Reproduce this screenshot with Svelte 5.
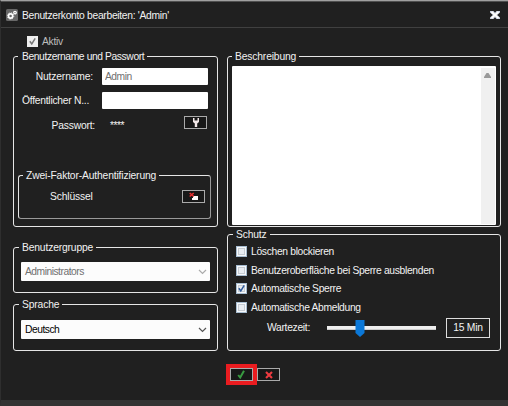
<script>
  let active = $state(true);
  let username = $state("Admin");
  let publicName = $state("");
  let description = $state("");
  let wait = $state(15);

  let options = $state([
    { label: "Löschen blockieren", checked: false },
    { label: "Benutzeroberfläche bei Sperre ausblenden", checked: false },
    { label: "Automatische Sperre", checked: true },
    { label: "Automatische Abmeldung", checked: false },
  ]);
</script>

{#snippet chevron()}
  <svg class="chevron" width="9" height="6" viewBox="0 0 9 6">
    <path d="M1 1l3.5 3.5L8 1" fill="none" stroke="currentColor" stroke-width="1.2" />
  </svg>
{/snippet}

{#snippet tick()}
  <svg width="11" height="11" viewBox="0 0 11 11">
    <path d="M2.8 5.2l2 2.8L8.2 2.4" fill="none" stroke="currentColor" stroke-width="1.5" />
  </svg>
{/snippet}

<div class="window">
  <header>
    <svg class="gear" width="12" height="12" viewBox="0 0 12 12">
      <rect width="12" height="12" rx="1.5" fill="#686868" />
      <circle cx="4.6" cy="7" r="2.1" fill="none" stroke="#fff" stroke-width="1.7" />
      <circle cx="4.6" cy="7" r="3.2" fill="none" stroke="#fff" stroke-width="0.8" stroke-dasharray="1.2 1.3" />
      <circle cx="9" cy="3.6" r="1.3" fill="none" stroke="#fff" stroke-width="1.2" />
    </svg>
    <h1>Benutzerkonto bearbeiten: 'Admin'</h1>
    <button class="close" aria-label="Schließen">
      <svg width="10" height="8" viewBox="0 0 10 8">
        <path d="M0 0h3.5L5 1.8 6.5 0H10v1.5L7.2 4 10 6.5V8H6.5L5 6.2 3.5 8H0V6.5L2.8 4 0 1.5z" fill="#c9cfe0" />
        <path d="M1.5 0.8l7 6.4M8.5 0.8l-7 6.4" stroke="#fff" stroke-width="1.7" />
      </svg>
    </button>
  </header>

  <div class="active-row">
    <span class="check disabled">{#if active}{@render tick()}{/if}</span>
    <span>Aktiv</span>
  </div>

  <main>
    <div class="column">
      <fieldset class="account">
        <legend class="tight">Benutzername und Passwort</legend>
        <div class="field name">
          <span class="label">Nutzername:</span>
          <input class="muted" bind:value={username} />
        </div>
        <div class="field public">
          <span class="label left">Öffentlicher N...</span>
          <input bind:value={publicName} />
        </div>
        <div class="field password">
          <span class="label">Passwort:</span>
          <span class="stars">****</span>
          <button class="icon-button" aria-label="Passwort ändern">
            <svg width="8" height="9" viewBox="0 0 8 9">
              <path d="M1 0h1.5v2.500h3V0H7v4L5.200 5.400V9H2.800V5.400L1 4z" fill="#f4e9e9" />
            </svg>
          </button>
        </div>
        <fieldset class="factor">
          <legend>Zwei-Faktor-Authentifizierung</legend>
          <span>Schlüssel</span>
          <button class="icon-button" aria-label="Schlüssel entfernen">
            <svg width="10" height="9" viewBox="0 0 10 9">
              <path d="M4 4h5v4H3V6h1z" fill="#fff" />
              <path d="M0.700 1l4 3.500M4.700 1l-4 3.500" stroke="#e83030" stroke-width="1.600" />
            </svg>
          </button>
        </fieldset>
      </fieldset>

      <fieldset class="group">
        <legend>Benutzergruppe</legend>
        <div class="select muted">Administrators {@render chevron()}</div>
      </fieldset>

      <fieldset class="language">
        <legend>Sprache</legend>
        <div class="select">Deutsch {@render chevron()}</div>
      </fieldset>
    </div>

    <div class="column">
      <fieldset class="description">
        <legend>Beschreibung</legend>
        <div class="area">
          <textarea bind:value={description}></textarea>
          <div class="scrollbar">
            <svg width="7" height="5" viewBox="0 0 7 5">
              <path d="M2.500 0h2L7 4v1H0V4z" fill="#999" />
            </svg>
          </div>
        </div>
      </fieldset>

      <fieldset class="protection">
        <legend>Schutz</legend>
        {#each options as option}
          <label class="option">
            <input type="checkbox" bind:checked={option.checked} />
            <span class="check">{#if option.checked}{@render tick()}{/if}</span>
            <span>{option.label}</span>
          </label>
        {/each}
        <div class="wait">
          <span class="wait-label">Wartezeit:</span>
          <div class="slider">
            <div class="track"></div>
            <svg class="thumb" width="10" height="17" viewBox="0 0 10 17">
              <path d="M0.500 0h9v13L5 17 0.500 13z" fill="#0b78d8" />
            </svg>
          </div>
          <div class="minutes">{wait} Min</div>
        </div>
      </fieldset>
    </div>
  </main>

  <footer>
    <div class="highlight">
      <button class="icon-button" aria-label="OK">
        <svg width="9" height="9" viewBox="0 0 9 9">
          <path d="M1.200 5l2 2.500L7 0.800" fill="none" stroke="#389a40" stroke-width="2" />
        </svg>
      </button>
    </div>
    <button class="icon-button" aria-label="Abbrechen">
      <svg width="8" height="8" viewBox="0 0 8 8">
        <path d="M1 1l6 6M7 1L1 7" stroke="#ee3b40" stroke-width="2.100" />
      </svg>
    </button>
  </footer>
</div>

<style>
  :global(body) {
    margin: 0;
    background: #202020;
  }

  .window {
    width: 508px;
    height: 406px;
    box-sizing: border-box;
    display: flex;
    flex-direction: column;
    border-top: 1px solid #a0a0a0;
    border-left: 1px solid #2e2e2e;
    border-bottom: 6px solid #333;
    background: #202020;
    color: #f2f2f2;
    font: 10.3px/13px "Liberation Sans", Arial, sans-serif;
    letter-spacing: -0.15px;
    white-space: nowrap;
    overflow: hidden;
  }

  svg {
    display: block;
    flex: none;
  }

  button,
  input,
  textarea {
    box-sizing: border-box;
    margin: 0;
    padding: 0;
    border: 0;
    border-radius: 0;
    font: inherit;
    letter-spacing: inherit;
    outline: none;
  }

  header {
    height: 27px;
    box-sizing: border-box;
    display: flex;
    align-items: center;
    padding: 1px 8px 0 5px;
    border-top: 1px solid #505050;
    border-bottom: 1px solid #404040;
  }

  h1 {
    flex: 1;
    margin: 0 0 0 4px;
    font: inherit;
    letter-spacing: -0.3px;
  }

  .close {
    background: none;
  }

  .active-row {
    height: 22px;
    display: flex;
    align-items: center;
    gap: 4px;
    padding: 5px 0 0 26px;
    box-sizing: border-box;
    color: #bdbdbd;
    letter-spacing: -0.3px;
  }

  .check {
    width: 11px;
    height: 11px;
    box-sizing: border-box;
    flex: none;
    border: 1px solid #a9bed2;
    background: #e9edf2;
    box-shadow: inset 0 0 0 1px #f7f9fb, inset 0 0 0 2px #c6ccd3;
    color: #315c9c;
  }

  .check svg {
    margin: -1px;
  }

  .check.disabled {
    border-color: #eee;
    background: #eee;
    box-shadow: none;
    color: #777;
  }

  main {
    display: grid;
    grid-template-columns: 205px 274px;
    column-gap: 9px;
    padding-left: 12px;
  }

  .column {
    display: flex;
    flex-direction: column;
  }

  fieldset {
    box-sizing: border-box;
    min-width: 0;
    margin: 0;
    padding: 0 5px;
    border: 1px solid #e6e6e6;
    border-radius: 3px;
  }

  legend {
    height: 13px;
    padding: 0 3px;
  }

  legend.tight {
    padding-left: 4px;
    letter-spacing: -0.4px;
  }

  .account {
    height: 177px;
    padding: 0 4px;
  }

  .field {
    display: flex;
    align-items: center;
  }

  .name {
    padding-top: 5px;
  }

  .public {
    padding-top: 7px;
  }

  .password {
    padding-top: 7px;
  }

  .password > span {
    position: relative;
    top: 3px;
  }

  .label {
    width: 75px;
    text-align: right;
  }

  .password .label {
    width: 77px;
    letter-spacing: -0.2px;
  }

  .label.left {
    text-align: left;
    padding-left: 4px;
    width: 71px;
    letter-spacing: -0.25px;
  }

  .field input {
    width: 106px;
    height: 17px;
    margin-left: 9px;
    padding: 0 3px;
    border-radius: 1px;
    background: #fff;
    color: #222;
    letter-spacing: -0.5px;
  }

  .muted,
  .field input.muted {
    color: #707070;
  }

  .stars {
    flex: 1;
    margin-left: 15px;
    letter-spacing: -0.5px;
  }

  .icon-button {
    width: 23px;
    height: 13px;
    display: flex;
    align-items: center;
    justify-content: center;
    border: 1px solid #aaa;
    background: #181818;
  }

  .password .icon-button {
    margin-right: 6px;
  }

  .factor {
    display: flex;
    align-items: flex-start;
    justify-content: space-between;
    width: 193px;
    height: 50px;
    margin-top: 40px;
    padding: 8px 5px 0 31px;
    border-color: #e6e6e6 #999 #999 #e6e6e6;
  }

  .factor legend {
    margin-left: -27px;
  }

  .group {
    height: 52px;
    margin-top: 14px;
    padding: 8px 7px 0;
  }

  .language {
    height: 53px;
    margin-top: 5px;
    padding: 9px 7px 0;
  }

  .group legend,
  .language legend {
    margin-left: -2px;
  }

  .select {
    height: 19px;
    display: flex;
    align-items: center;
    justify-content: space-between;
    padding: 0 3px 0 4px;
    border-radius: 1px;
    background: #fcfcfc;
    color: #000;
    letter-spacing: -0.5px;
  }

  .select.muted {
    color: #707070;
  }

  .select .chevron {
    color: #555;
  }

  .select.muted .chevron {
    color: #aaa;
  }

  .description {
    height: 177px;
    padding: 3px 4px 0;
  }

  .area {
    height: 159px;
    display: flex;
    background: #fff;
    border-radius: 1px;
  }

  textarea {
    flex: 1;
    resize: none;
    background: none;
  }

  .scrollbar {
    width: 14px;
    margin: 2px 1px 1px 0;
    padding: 5px 3px 0;
    box-sizing: border-box;
    background: #f0f0f0;
  }

  .protection {
    height: 123px;
    margin-top: 1px;
    padding: 1px 8px 0;
  }

  .protection legend {
    margin-left: -3px;
  }

  .option {
    display: flex;
    align-items: center;
    gap: 4px;
    height: 18.7px;
    letter-spacing: -0.32px;
  }

  .option input {
    display: none;
  }

  .wait {
    display: flex;
    align-items: center;
    padding: 1px 0 0 31px;
  }

  .wait-label {
    width: 42px;
    letter-spacing: -0.3px;
  }

  .slider {
    position: relative;
    width: 109px;
    margin: 0 10px 0 18px;
  }

  .track {
    height: 3px;
    border: 1px solid #ccc;
    border-width: 0 0 1px;
    background: #eee;
  }

  .thumb {
    position: absolute;
    left: 28px;
    top: -6px;
  }

  .minutes {
    width: 44px;
    height: 20px;
    box-sizing: border-box;
    border: 1px solid #ddd;
    text-align: center;
    line-height: 18px;
    letter-spacing: -0.25px;
  }

  footer {
    display: flex;
    align-items: center;
    padding: 13px 0 0 225px;
  }

  .highlight {
    padding: 4px;
    background: #ea1c20;
  }
</style>
